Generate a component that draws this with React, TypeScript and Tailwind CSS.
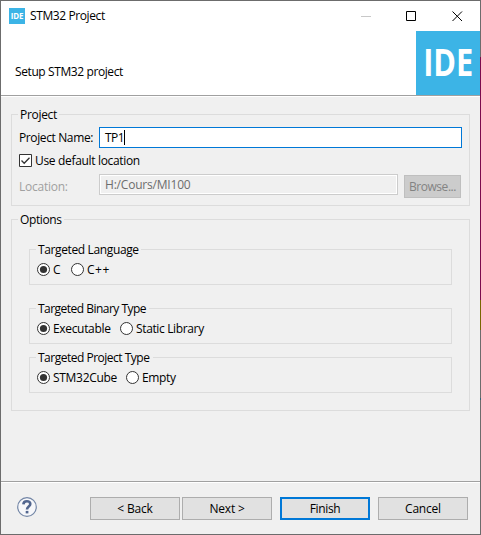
import type { ReactNode } from 'react';

function Group({ title, className, legend, children }: { title: string; className: string; legend: string; children: ReactNode }) {
  return (
    <section className={`border border-[#dcdcdc] ${className}`}>
      <h2 className={`-mt-2 ml-1.5 flex h-4 items-center bg-[#f0f0f0] pl-0.5 ${legend}`}>{title}</h2>
      {children}
    </section>
  );
}

function Radio({ label, checked, className }: { label: string; checked?: boolean; className: string }) {
  return (
    <label className={`flex h-[13px] shrink-0 items-center gap-[3px] ${className}`}>
      <svg width="13" height="13" viewBox="0 0 13 13" className="shrink-0">
        <circle cx="6.5" cy="6.5" r="6" fill="#fff" stroke="#333" />
        {checked && <circle cx="6.5" cy="6.5" r="3.6" fill="#333" />}
      </svg>
      <span>{label}</span>
    </label>
  );
}

function Button({ label, className }: { label: string; className: string }) {
  return (
    <button className={`flex h-[23px] shrink-0 items-center justify-center ${className}`}>{label}</button>
  );
}

function IdeMark({ size, small }: { size: string; small?: boolean }) {
  return (
    <div className={`flex shrink-0 items-center justify-center bg-[#3cb4e6] font-['Open_Sans',sans-serif] font-bold text-white ${size}`}>
      <span className={small ? 'scale-x-[0.88] pb-px text-[9px] leading-none tracking-[-0.2px]' : 'scale-x-[0.83] pb-1 text-[37px] leading-none'}>IDE</span>
    </div>
  );
}

export default function App() {
  return (
    <div className="flex h-[535px] w-[481px] overflow-hidden bg-[#f0f0f0] font-['Open_Sans','Noto_Sans',sans-serif] text-[12px] leading-4 whitespace-nowrap text-black">
      <main className="flex w-[480px] shrink-0 flex-col border-t border-b border-l border-[#6c6c6c]">
        <header className="flex h-[94px] shrink-0 flex-col bg-white">
          <div className="flex h-[30px] items-center">
            <div className="ml-2 flex grow items-center gap-[5px]">
              <IdeMark size="size-4" small />
              <h1 className="tracking-[-0.4px]">STM32 Project</h1>
            </div>
            <svg width="102" height="11" viewBox="0 0 102 11" className="mr-[17px]" fill="none">
              <path d="M0 5.5h10" stroke="#c8c8c8" />
              <path d="M45.5.5h9v9h-9z" stroke="#000" />
              <path d="M91.5.5l9.5 9.5M101 .5L91.5 10" stroke="#000" />
            </svg>
          </div>
          <div className="flex h-16 justify-between">
            <p className="mt-[33px] ml-3.5 tracking-[-0.4px]">Setup STM32 project</p>
            <IdeMark size="size-16" />
          </div>
        </header>
        <div className="h-0.5 shrink-0 border-b border-white bg-[#a0a0a0]" />

        <div className="flex h-[384px] shrink-0 flex-col gap-[13px] pt-[17px] pl-2.5">
          <Group title="Project" className="h-[92px] w-[459px]" legend="w-[41px] tracking-[-0.3px]">
            <div className="mt-1 flex h-[21px] items-center pl-[7px]">
              <span className="w-20 pt-px tracking-[-0.38px]">Project Name:</span>
              <div className="flex h-[21px] w-[363px] items-center border border-[#0078d7] bg-white pl-[5px]">
                <span className="tracking-[-0.5px]">TP1</span>
                <span className="h-[15px] w-px bg-black" />
              </div>
            </div>
            <label className="mt-1.5 flex h-[13px] items-center gap-[3px] pl-[7px]">
              <svg width="13" height="13" viewBox="0 0 13 13" fill="none">
                <path d="M.5.5h12v12H.5z" fill="#fff" stroke="#333" />
                <path d="M2.5 6.5l2.7 2.8 5.3-5.6" stroke="#333" strokeWidth="1.3" />
              </svg>
              <span className="tracking-[-0.33px]">Use default location</span>
            </label>
            <div className="mt-[7px] flex h-6 items-start pl-[7px]">
              <span className="mt-[5px] w-20 tracking-[-0.25px] text-[#a0a0a0]">Location:</span>
              <div className="flex h-[21px] w-[299px] items-center border border-[#cccccc] p-px">
                <span className="size-full bg-[#f0f0f0] pl-1 leading-[17px] tracking-[-0.2px] text-[#6d6d6d] outline outline-white">H:/Cours/MI100</span>
              </div>
              <Button label="Browse..." className="mt-px ml-1.5 w-[57px] border border-[#bfbfbf] bg-[#cccccc] tracking-[-0.45px] text-[#838383]" />
            </div>
          </Group>

          <Group title="Options" className="h-[192px] w-[459px]" legend="w-[46px] tracking-[-0.4px]">
            <div className="mt-[21px] ml-[17px] flex flex-col">
              <Group title="Targeted Language" className="h-9 w-[423px]" legend="w-[105px] tracking-[-0.37px]">
                <div className="mt-[5px] flex pl-[7px]">
                  <Radio label="C" checked className="w-[34px]" />
                  <Radio label="C++" className="tracking-[0.5px]" />
                </div>
              </Group>
              <Group title="Targeted Binary Type" className="mt-[23px] h-9 w-[423px]" legend="w-[113px] tracking-[-0.52px]">
                <div className="mt-[5px] flex pl-[7px]">
                  <Radio label="Executable" checked className="w-[83px] tracking-[-0.33px]" />
                  <Radio label="Static Library" className="tracking-[-0.36px]" />
                </div>
              </Group>
              <Group title="Targeted Project Type" className="mt-[13px] h-9 w-[423px]" legend="w-[117px] tracking-[-0.5px]">
                <div className="mt-[5px] flex pl-[7px]">
                  <Radio label="STM32Cube" checked className="w-[89px] tracking-[-0.3px]" />
                  <Radio label="Empty" className="tracking-[-0.35px]" />
                </div>
              </Group>
            </div>
          </Group>
        </div>

        <div className="h-0.5 shrink-0 border-b border-white bg-[#a0a0a0]" />
        <footer className="flex pt-3.5 pl-4 tracking-[-0.2px]">
          <svg width="20" height="20" viewBox="0 0 20 20" fill="none" className="mr-[53px] shrink-0">
            <circle cx="10" cy="10" r="9.3" fill="#f6f7fa" stroke="#7386a6" strokeWidth="1.2" />
            <path d="M6.4 7.4C6.5 5.2 7.9 4.3 9.9 4.3c2.1 0 3.4 1 3.4 2.7 0 2.5-3.3 2.6-3.3 5.4" stroke="#52668f" strokeWidth="2.6" />
            <path d="M8.7 13.9h2.7v2.5H8.7z" fill="#52668f" />
          </svg>
          <Button label="< Back" className="w-[90px] border border-[#adadad] bg-[#e1e1e1]" />
          <Button label="Next >" className="ml-0.5 w-[90px] border border-[#adadad] bg-[#e1e1e1]" />
          <Button label="Finish" className="ml-2 w-[90px] border-2 border-[#0078d7] bg-[#e1e1e1] tracking-[-0.35px]" />
          <Button label="Cancel" className="ml-2 w-[90px] border border-[#adadad] bg-[#e1e1e1]" />
        </footer>
      </main>
      <div className="flex w-px shrink-0 flex-col bg-[#6c6c6c]">
        <div className="mt-[57px] h-[243px] bg-[#7b0a4d]" />
        <div className="h-[30px] bg-[#796600]" />
        <div className="mt-[68px] h-0.5 bg-[#2d6379]" />
      </div>
    </div>
  );
}
